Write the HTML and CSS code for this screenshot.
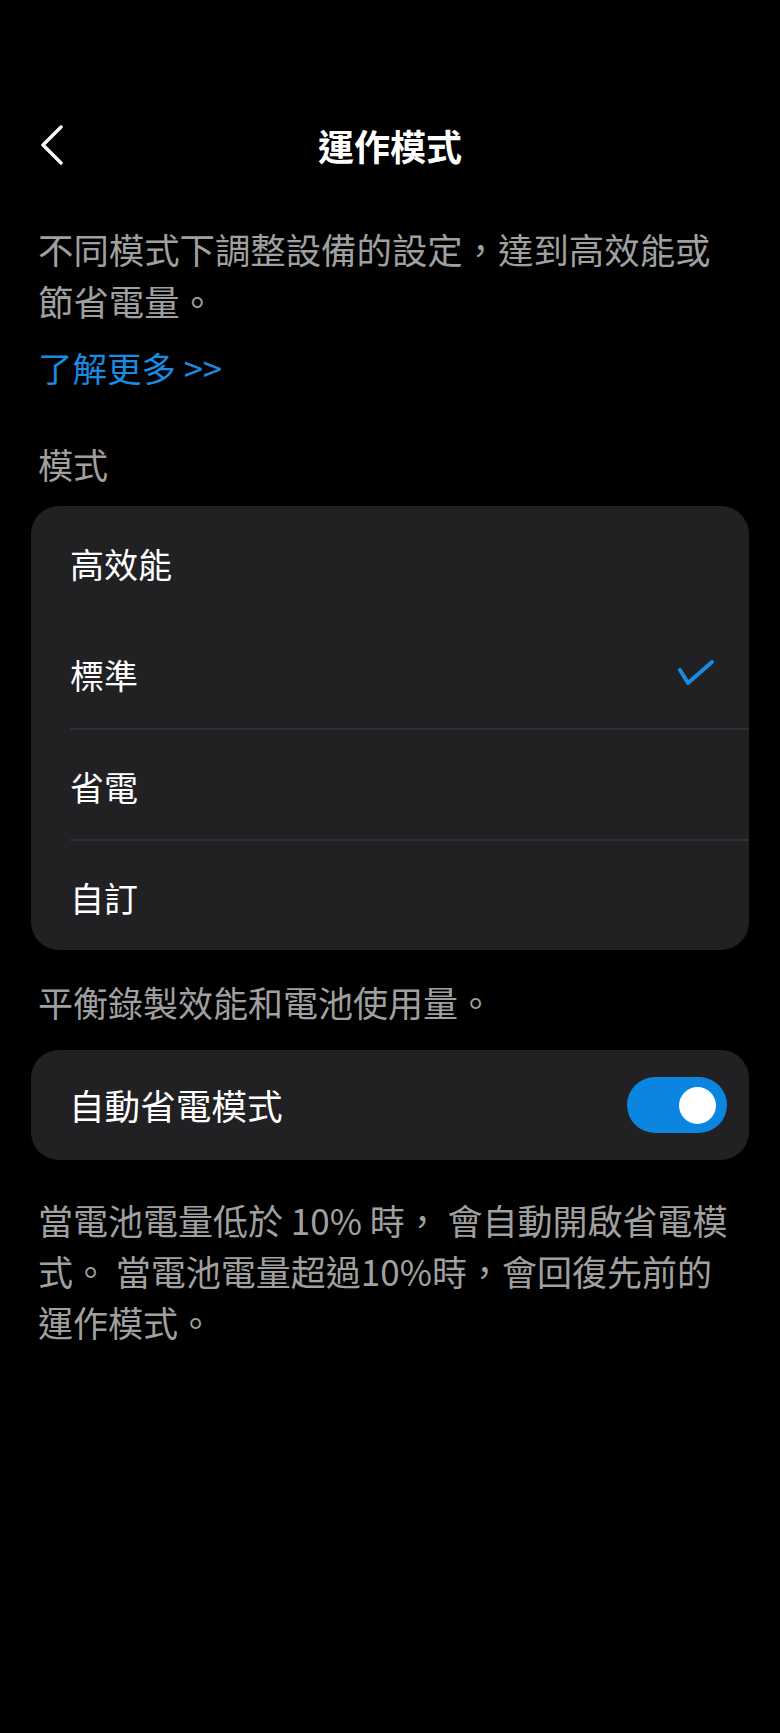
FILE: index.html
```html
<!DOCTYPE html>
<html lang="zh-Hant">
<head>
<meta charset="utf-8">
<title>運作模式</title>
<link rel="stylesheet" href="styles.css">
</head>
<body>
<div class="page">
  <header class="topbar">
    <button class="back" aria-label="返回">
      <svg width="26" height="40" viewBox="0 0 26 40"><path d="M22 2 L4 20 L22 38" fill="none" stroke="#ffffff" stroke-width="3.4" stroke-linecap="round" stroke-linejoin="round"/></svg>
    </button>
    <h1 class="title">運作模式</h1>
  </header>

  <p class="desc">不同模式下調整設備的設定，達到高效能或節省電量。</p>
  <a class="more" href="#">了解更多 &gt;&gt;</a>

  <div class="label">模式</div>

  <div class="card">
    <div class="row"><span class="row-text">高效能</span></div>
    <div class="row"><span class="row-text">標準</span>
      <svg class="check" width="38" height="28" viewBox="0 0 38 28"><polyline points="3,11 11,24 35,3" fill="none" stroke="#1a8be0" stroke-width="4" stroke-linecap="round" stroke-linejoin="round"/></svg>
    </div>
    <div class="row sep"><span class="row-text">省電</span></div>
    <div class="row sep"><span class="row-text">自訂</span></div>
  </div>

  <p class="caption">平衡錄製效能和電池使用量。</p>

  <div class="card switch-card">
    <span class="switch-text">自動省電模式</span>
    <span class="toggle"><span class="knob"></span></span>
  </div>

  <p class="footnote">當電池電量低於 10% 時， 會自動開啟省電模式。 當電池電量超過10%時，會回復先前的運作模式。</p>
</div>
</body>
</html>
```

FILE: styles.css
```css
html, body {
  margin: 0;
  padding: 0;
  background: #000000;
}

body {
  font-family: "Noto Sans CJK TC", "Noto Sans", sans-serif;
  color: #ffffff;
  width: 780px;
  min-height: 1733px;
}

.page {
  padding: 100px 31px 0 31px;
}

.topbar {
  position: relative;
  height: 90px;
  display: flex;
  align-items: center;
  justify-content: center;
}

.back {
  position: absolute;
  left: 8px;
  top: 25px;
  background: none;
  border: 0;
  padding: 0;
  width: 26px;
  height: 40px;
  display: flex;
}

.title {
  margin: 0;
  font-size: 36px;
  font-weight: 700;
  line-height: 52px;
  color: #ffffff;
}

.desc,
.caption,
.footnote,
.label,
.more {
  font-size: 35px;
  line-height: 52px;
  color: #a0a0a0;
  margin: 0;
  padding: 0 13px 0 7px;
  display: block;
}

.desc {
  margin-top: 33px;
  font-size: 35.4px;
}

.more {
  color: #1a8be0;
  text-decoration: none;
  margin-top: 14px;
  font-size: 34.5px;
}

.label {
  margin-top: 45px;
}

.card {
  background: #212124;
  border-radius: 28px;
  overflow: hidden;
}

.label + .card {
  margin-top: 16px;
}

.row {
  height: 111px;
  margin-left: 39px;
  padding-right: 36px;
  display: flex;
  align-items: center;
  justify-content: space-between;
  box-sizing: border-box;
}

.row.sep {
  border-top: 2px solid #303034;
  height: 111px;
}

.row-text {
  font-size: 34px;
  line-height: 52px;
  color: #ffffff;
  padding-top: 4px;
}

.check {
  display: block;
  margin-right: -2px;
}

.caption {
  margin-top: 26px;
}

.switch-card {
  margin-top: 22px;
  height: 110px;
  display: flex;
  align-items: center;
  justify-content: space-between;
  padding: 0 22px 0 38px;
}

.switch-text {
  font-size: 35.6px;
  line-height: 52px;
  color: #ffffff;
}

.toggle {
  width: 100px;
  height: 56px;
  border-radius: 28px;
  background: #0b86e0;
  display: flex;
  align-items: center;
  justify-content: flex-end;
  padding-right: 11px;
  box-sizing: border-box;
}

.knob {
  width: 37px;
  height: 37px;
  border-radius: 50%;
  background: #ffffff;
}

.footnote {
  margin-top: 34px;
  line-height: 51px;
}
```
